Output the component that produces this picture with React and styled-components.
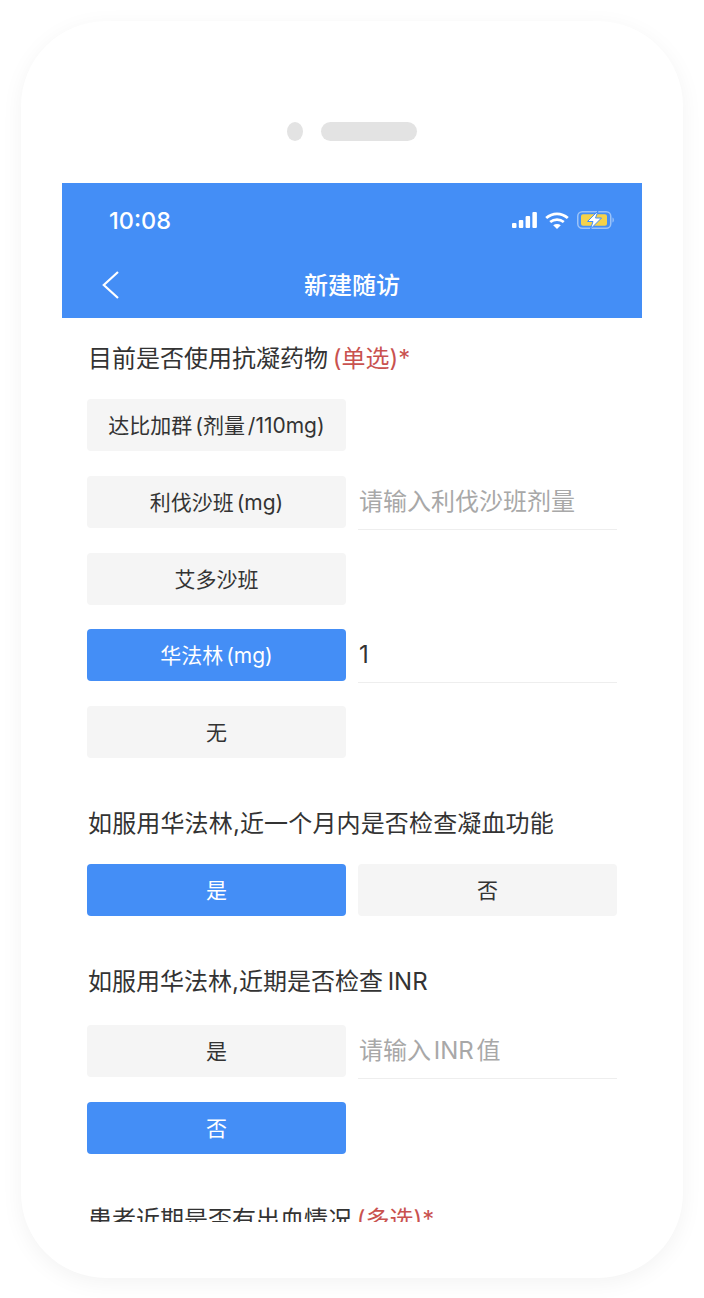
import React from "react";
import styled, { createGlobalStyle } from "styled-components";

const Global = createGlobalStyle`
  html, body { margin: 0; padding: 0; background: #fff; }
  body { font-family: Inter, "Noto Sans CJK SC", sans-serif; }
  * { box-sizing: border-box; }
`;

const Page = styled.div`
  width: 704px;
  height: 1298px;
  padding: 21px;
  overflow: hidden;
`;

const Phone = styled.div`
  width: 662px;
  height: 1257px;
  background: #fff;
  border-radius: 85px;
  box-shadow: 0 5px 22px rgba(0, 0, 0, 0.05);
  padding: 101px 41px 0;
`;

const Speaker = styled.div`
  display: flex;
  justify-content: center;
  gap: 18px;
  height: 19px;
  margin: 0 0 42px -1px;
`;

const Dot = styled.div`
  width: 16px;
  height: 19px;
  border-radius: 50%;
  background: #e3e3e3;
`;

const Pill = styled.div`
  width: 96px;
  height: 19px;
  border-radius: 10px;
  background: #e3e3e3;
`;

const Screen = styled.div`
  width: 580px;
  height: 1039px;
  overflow: hidden;
`;

const Header = styled.header`
  background: #448ef6;
  height: 135px;
  color: #fff;
  display: flex;
  flex-direction: column;
`;

const StatusBar = styled.div`
  display: flex;
  align-items: center;
  justify-content: space-between;
  height: 74px;
  padding: 0 27px 0 47px;
`;

const Time = styled.span`
  font-size: 23.5px;
  font-weight: 500;
`;

const StatusIcons = styled.div`
  display: flex;
  align-items: center;
  gap: 8px;
`;

const NavBar = styled.div`
  display: flex;
  align-items: center;
  justify-content: center;
  height: 61px;
  padding-bottom: 9px;
  position: relative;
`;

const BackIcon = styled.svg`
  position: absolute;
  left: 40px;
  top: 12px;
`;

const NavTitle = styled.h1`
  margin: 0;
  font-size: 24px;
  font-weight: 500;
  font-family: "Noto Sans CJK SC", sans-serif;
`;

const Form = styled.div`
  padding: 0 25px;
  color: #333;
  font-family: Inter, "Noto Sans CJK SC", sans-serif;
`;

const Question = styled.div`
  font-size: 24px;
  line-height: 34px;
  word-spacing: -2px;
  letter-spacing: ${(p) => p.$spread ?? 0}px;
  color: #333;
  margin: ${(p) => p.$top}px 0 ${(p) => p.$bottom ?? 23}px 1px;
`;

const Hint = styled.span`
  color: #c9524f;
`;

const Row = styled.div`
  display: grid;
  grid-template-columns: 259px 259px;
  grid-auto-rows: 52px;
  gap: 12px;
  margin-bottom: ${(p) => p.$gap ?? 25}px;
`;

const Choice = styled.div`
  display: flex;
  align-items: center;
  justify-content: center;
  border-radius: 4px;
  font-size: 21px;
  word-spacing: -3px;
  padding-bottom: 3px;
  background: ${(p) => (p.$on ? "#448ef6" : "#f5f5f5")};
  color: ${(p) => (p.$on ? "#fff" : "#333")};
`;

const Field = styled.div`
  display: flex;
  align-items: center;
  height: 54px;
  padding: 0 0 ${(p) => (p.$filled ? 2 : 6)}px 1px;
  font-size: 24px;
  word-spacing: -4px;
  border-bottom: 1px solid #eeeeee;
  color: ${(p) => (p.$filled ? "#333" : "#a8a8a8")};
`;

function Signal() {
  return (
    <svg width="25" height="16" viewBox="0 0 25 16">
      <rect x="0" y="11" width="4.5" height="5" rx="1" fill="#fff" />
      <rect x="6.8" y="8" width="4.5" height="8" rx="1" fill="#fff" />
      <rect x="13.6" y="4" width="4.5" height="12" rx="1" fill="#fff" />
      <rect x="20.4" y="0" width="4.5" height="16" rx="1" fill="#fff" />
    </svg>
  );
}

function Wifi() {
  return (
    <svg width="24" height="17" viewBox="0 0 24 17" fill="none" stroke="#fff" strokeWidth="2.8">
      <path d="M1.2 6C7.5 .4 16.5 .4 22.8 6" />
      <path d="M5.2 10C9.2 6.8 14.8 6.8 18.8 10" />
      <path d="M12 17L8.2 13.2C10.4 11.6 13.6 11.6 15.8 13.2Z" fill="#fff" stroke="none" />
    </svg>
  );
}

function Battery() {
  return (
    <svg width="38" height="18" viewBox="0 0 38 18">
      <rect x=".75" y=".75" width="33" height="16.5" rx="4.5" fill="none" stroke="#9cc3f8" strokeWidth="1.5" />
      <rect x="4" y="3.2" width="26" height="11.6" rx="2" fill="#f5d24a" />
      <path d="M35.5 6.5c1.8.5 1.8 4.5 0 5z" fill="#9cc3f8" />
      <path d="M21 0L10.5 10.5h5.5L13.5 18l11-11h-6z" fill="#fff" stroke="#448ef6" strokeWidth="1" />
    </svg>
  );
}

export default function App() {
  return (
    <Page>
      <Global />
      <Phone>
        <Speaker>
          <Dot />
          <Pill />
        </Speaker>
        <Screen>
          <Header>
            <StatusBar>
              <Time>10:08</Time>
              <StatusIcons>
                <Signal />
                <Wifi />
                <Battery />
              </StatusIcons>
            </StatusBar>
            <NavBar>
              <BackIcon width="18" height="32" viewBox="0 0 18 32" fill="none" stroke="#fff" strokeWidth="2.2">
                <path d="M16 3L1.8 16 16 29" />
              </BackIcon>
              <NavTitle>新建随访</NavTitle>
            </NavBar>
          </Header>
          <Form>
            <Question $top={24}>
              目前是否使用抗凝药物 <Hint>(单选)*</Hint>
            </Question>
            <Row>
              <Choice>达比加群 (剂量 /110mg)</Choice>
            </Row>
            <Row>
              <Choice>利伐沙班 (mg)</Choice>
              <Field>请输入利伐沙班剂量</Field>
            </Row>
            <Row $gap={24}>
              <Choice>艾多沙班</Choice>
            </Row>
            <Row>
              <Choice $on>华法林 (mg)</Choice>
              <Field $filled>1</Field>
            </Row>
            <Row>
              <Choice>无</Choice>
            </Row>
            <Question $top={49} $spread={0.15}>
              如服用华法林,近一个月内是否检查凝血功能
            </Question>
            <Row>
              <Choice $on>是</Choice>
              <Choice>否</Choice>
            </Row>
            <Question $top={49} $bottom={26}>
              如服用华法林,近期是否检查 INR
            </Question>
            <Row>
              <Choice>是</Choice>
              <Field>请输入 INR 值</Field>
            </Row>
            <Row>
              <Choice $on>否</Choice>
            </Row>
            <Question $top={49}>
              患者近期是否有出血情况 <Hint>(多选)*</Hint>
            </Question>
          </Form>
        </Screen>
      </Phone>
    </Page>
  );
}
